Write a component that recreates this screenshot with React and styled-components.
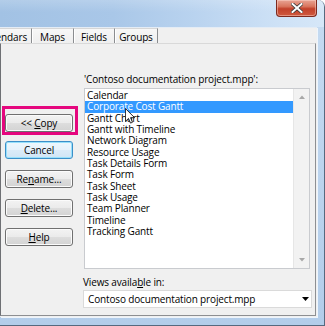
import React from "react";
import styled, { createGlobalStyle, css } from "styled-components";

const Global = createGlobalStyle`
  html, body { margin: 0; padding: 0; background: #fff; }
  body { font-family: "Open Sans", "Noto Sans", sans-serif; color: #000; }
  * { box-sizing: border-box; }
`;

const Window = styled.div`
  width: 325px;
  height: 326px;
  display: flex;
  flex-direction: column;
  overflow: hidden;
  background: #bdd5ef;
  border-top-right-radius: 7px;
  border-right: 1px solid #56697f;
  border-bottom: 1px solid #56697f;
  font-size: 10px;
  letter-spacing: -0.15px;
`;

const TitleBar = styled.div`
  height: 27px;
  flex: none;
  display: flex;
  justify-content: flex-end;
  align-items: flex-start;
  padding-right: 7px;
  background:
    linear-gradient(180deg, rgba(255,255,255,0.18) 0%, rgba(255,255,255,0) 45%),
    linear-gradient(90deg, #a2c2e4 0%, #a9c7e8 35%, #b9d3ef 60%, #cde1f6 85%, #d6e7f8 100%);
`;

const CloseButton = styled.div`
  width: 41px;
  height: 17px;
  display: flex;
  align-items: center;
  justify-content: center;
  border: 1px solid #7d2a1f;
  border-top: none;
  border-radius: 0 0 4px 4px;
  background: linear-gradient(180deg, #e8a494 0%, #d9765f 40%, #c2412b 55%, #cf5a3f 100%);
  box-shadow: inset 0 0 0 1px rgba(255, 220, 210, 0.45);
`;

const Body = styled.div`
  flex: 1;
  display: flex;
  padding: 0 7px 8px 0;
  background: linear-gradient(180deg, #c4daf1 0%, #b3cdea 100%);
`;

const Client = styled.div`
  flex: 1;
  display: flex;
  flex-direction: column;
  background: #f0f0f0;
  box-shadow: 1px 1px 0 #eef5fc;
`;

const TabStrip = styled.div`
  height: 16px;
  flex: none;
  display: flex;
  align-items: stretch;
  overflow: hidden;
  border-top: 1px solid #e4ecf5;
`;

const Tab = styled.div`
  flex: none;
  width: ${(p) => p.$w}px;
  margin-left: ${(p) => p.$ml || 0}px;
  display: flex;
  align-items: center;
  justify-content: ${(p) => (p.$end ? "flex-end" : "center")};
  padding-right: ${(p) => (p.$end ? 4 : 0)}px;
  white-space: nowrap;
  font-size: 10px;
  line-height: 12px;
  padding-top: 1px;
  background: linear-gradient(180deg, #f7f7f7 0%, #efefef 100%);
  border-top: 1px solid #d6d6d6;
  border-right: 1px solid #8b8d90;
  box-shadow: inset 1px 0 0 #ffffff;
`;

const Panel = styled.div`
  flex: 1;
  display: flex;
  margin: 0 1px 1px 0;
  background: #f0f0f0;
  border-top: 1px solid #d9d9d9;
  border-left: 1px solid #6e7074;
  border-right: 1px solid #8d8f92;
  border-bottom: 1px solid #8d8f92;
`;

const ButtonColumn = styled.div`
  width: 72px;
  flex: none;
  display: flex;
  flex-direction: column;
  padding: 70px 0 0 4px;
`;

const Button = styled.div`
  position: relative;
  width: 68px;
  height: 18px;
  margin-top: ${(p) => p.$mt || 0}px;
  display: flex;
  align-items: center;
  justify-content: center;
  font-size: 10px;
  line-height: 12px;
  white-space: pre;
  border: 1px solid #707070;
  border-radius: 3px;
  background: linear-gradient(180deg, #f3f3f3 0%, #ebebeb 48%, #dddddd 52%, #d3d3d3 100%);
  box-shadow: inset 0 0 0 1px #fbfbfb;
  ${(p) =>
    p.$default &&
    css`
      border-color: #3c8fc8;
      box-shadow: inset 0 0 0 1px #98e0fb;
      background: linear-gradient(180deg, #eef7fd 0%, #e7f2fb 48%, #dbebf8 52%, #d0e5f5 100%);
    `}
  ${(p) =>
    p.$marked &&
    css`
      &::after {
        content: "";
        position: absolute;
        top: -9px;
        left: -4px;
        right: -6px;
        bottom: -4px;
        border: 3px solid #e5077e;
      }
    `}
`;

const Key = styled.span`
  text-decoration: underline;
  text-underline-offset: 1px;
`;

const RightColumn = styled.div`
  width: 229px;
  flex: none;
  margin-left: 10px;
  display: flex;
  flex-direction: column;
  padding-top: 29px;
`;

const Label = styled.div`
  height: 12px;
  line-height: 12px;
  font-size: 10px;
  white-space: nowrap;
  padding-left: ${(p) => p.$pl || 0}px;
  margin-top: ${(p) => p.$mt || 0}px;
`;

const ListBox = styled.div`
  position: relative;
  width: 226px;
  height: 181px;
  margin: 3px 0 0 1px;
  display: flex;
  background: #fff;
  border: 1px solid #c9cbcf;
`;

const Items = styled.div`
  flex: 1;
  padding-top: 1px;
`;

const Item = styled.div`
  height: 11.35px;
  line-height: 11.35px;
  font-size: 10px;
  padding-left: 2px;
  white-space: nowrap;
  ${(p) =>
    p.$selected &&
    css`
      background: #3399ff;
      color: #fff;
    `}
`;

const ScrollBar = styled.div`
  width: 16px;
  flex: none;
  display: flex;
  flex-direction: column;
  justify-content: space-between;
  align-items: center;
  padding: 6px 0 6px;
  background: #f2f2f2;
  border-left: 1px solid #e6e6e6;
`;

const Cursor = styled.svg`
  position: absolute;
  left: 40px;
  top: 19px;
`;

const Select = styled.div`
  height: 18px;
  margin-top: 2px;
  display: flex;
  align-items: center;
  justify-content: space-between;
  padding: 0 2px 0 4px;
  background: #fff;
  border: 1px solid #dadada;
  font-size: 10px;
  white-space: nowrap;
`;

const views = [
  "Calendar",
  "Corporate Cost Gantt",
  "Gantt Chart",
  "Gantt with Timeline",
  "Network Diagram",
  "Resource Usage",
  "Task Details Form",
  "Task Form",
  "Task Sheet",
  "Task Usage",
  "Team Planner",
  "Timeline",
  "Tracking Gantt",
];

const tabs = [
  { label: "Calendars", w: 60, ml: -28, end: true },
  { label: "Maps", w: 42 },
  { label: "Fields", w: 41 },
  { label: "Groups", w: 43 },
];

export default function App() {
  return (
    <>
      <Global />
      <Window>
        <TitleBar>
          <CloseButton>
            <svg width="12" height="10" viewBox="0 0 12 10">
              <path
                d="M1.5 1 L10.5 9 M10.5 1 L1.5 9"
                stroke="#3b3b3b"
                strokeWidth="3.6"
                strokeLinecap="square"
              />
              <path
                d="M1.5 1 L10.5 9 M10.5 1 L1.5 9"
                stroke="#ffffff"
                strokeWidth="2"
                strokeLinecap="square"
              />
            </svg>
          </CloseButton>
        </TitleBar>
        <Body>
          <Client>
            <TabStrip>
              {tabs.map((t) => (
                <Tab key={t.label} $w={t.w} $ml={t.ml} $end={t.end}>
                  {t.label}
                </Tab>
              ))}
            </TabStrip>
            <Panel>
              <ButtonColumn>
                <Button $marked>
                  <span>
                    {"<< "}
                    <Key>C</Key>opy
                  </span>
                </Button>
                <Button $mt={9} $default>
                  <span>Cancel</span>
                </Button>
                <Button $mt={11}>
                  <span>
                    Re<Key>n</Key>ame...
                  </span>
                </Button>
                <Button $mt={11}>
                  <span>
                    <Key>D</Key>elete...
                  </span>
                </Button>
                <Button $mt={11}>
                  <span>
                    <Key>H</Key>elp
                  </span>
                </Button>
              </ButtonColumn>
              <RightColumn>
                <Label $pl={1}>'Contoso documentation project.mpp':</Label>
                <ListBox>
                  <Items>
                    {views.map((v, i) => (
                      <Item key={v} $selected={i === 1}>
                        {v}
                      </Item>
                    ))}
                  </Items>
                  <ScrollBar>
                    <svg width="6" height="4" viewBox="0 0 6 4">
                      <path d="M0 4 L3 0.5 L6 4 Z" fill="#a8a8a8" />
                    </svg>
                    <svg width="6" height="4" viewBox="0 0 6 4">
                      <path d="M0 0 L3 3.5 L6 0 Z" fill="#a8a8a8" />
                    </svg>
                  </ScrollBar>
                  <Cursor width="10" height="16" viewBox="0 0 12 19">
                    <path
                      d="M0.5 0.5 L0.5 16 L4.2 12.4 L6.6 18 L9 17 L6.7 11.5 L11.5 11.5 Z"
                      fill="#fff"
                      stroke="#000"
                      strokeWidth="1"
                      strokeLinejoin="round"
                    />
                  </Cursor>
                </ListBox>
                <Label $mt={7}>
                  Views availa<Key>b</Key>le in:
                </Label>
                <Select>
                  <span>Contoso documentation project.mpp</span>
                  <svg width="7" height="4" viewBox="0 0 7 4">
                    <path d="M0 0 L7 0 L3.5 4 Z" fill="#000" />
                  </svg>
                </Select>
              </RightColumn>
            </Panel>
          </Client>
        </Body>
      </Window>
    </>
  );
}
